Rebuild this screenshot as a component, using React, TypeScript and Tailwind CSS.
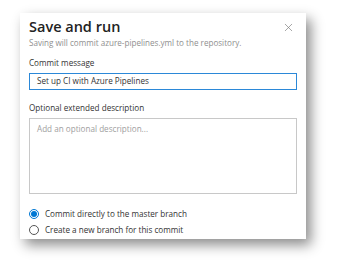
import { X } from "lucide-react";

const font = { fontFamily: '"Open Sans", "Noto Sans", sans-serif' };

const Radio = ({ checked, label }: { checked?: boolean; label: string }) => (
  <label className="flex items-center gap-[6px] h-[16px] text-[8.15px] text-[#333]">
    {checked ? (
      <span className="w-[10px] h-[10px] rounded-full border border-[#0078d4] flex items-center justify-center">
        <span className="w-[6px] h-[6px] rounded-full bg-[#0078d4]" />
      </span>
    ) : (
      <span className="w-[10px] h-[10px] rounded-full border border-[#555]" />
    )}
    <span>{label}</span>
  </label>
);

const App = () => {
  return (
    <div className="w-[340px] h-[270px] bg-white pt-[13px] pl-[20px]" style={font}>
      <div className="w-[286px] h-[226px] bg-white shadow-[5px_6px_12px_rgba(0,0,0,0.45)] px-[9px] pt-[5px]">
        <div className="flex justify-between items-start">
          <div>
            <h2 className="text-[14.5px] leading-[18px] font-semibold text-[#222]">Save and run</h2>
            <p className="text-[8.1px] leading-[11px] text-[#8f8f8f] mt-[1px]">
              Saving will commit azure-pipelines.yml to the repository.
            </p>
          </div>
          <X className="w-[13px] h-[13px] mt-[3px] mr-[2px] text-[#777]" strokeWidth={1.2} />
        </div>

        <div className="mt-[9px] text-[8.15px] leading-[12px] text-[#333]">Commit message</div>
        <div className="mt-[4px] h-[17px] border border-[#2b88d8] flex items-center px-[7px] text-[8.15px] text-[#333]">
          Set up CI with Azure Pipelines
        </div>

        <div className="mt-[12px] text-[8.15px] leading-[12px] text-[#333]">Optional extended description</div>
        <div className="mt-[4px] h-[76px] border border-[#c8c8c8] px-[7px] pt-[4px] text-[8.15px] text-[#a0a0a0]">
          Add an optional description...
        </div>

        <div className="mt-[12px] flex flex-col">
          <Radio checked label="Commit directly to the master branch" />
          <Radio label="Create a new branch for this commit" />
        </div>
      </div>
    </div>
  );
};

export default App;
